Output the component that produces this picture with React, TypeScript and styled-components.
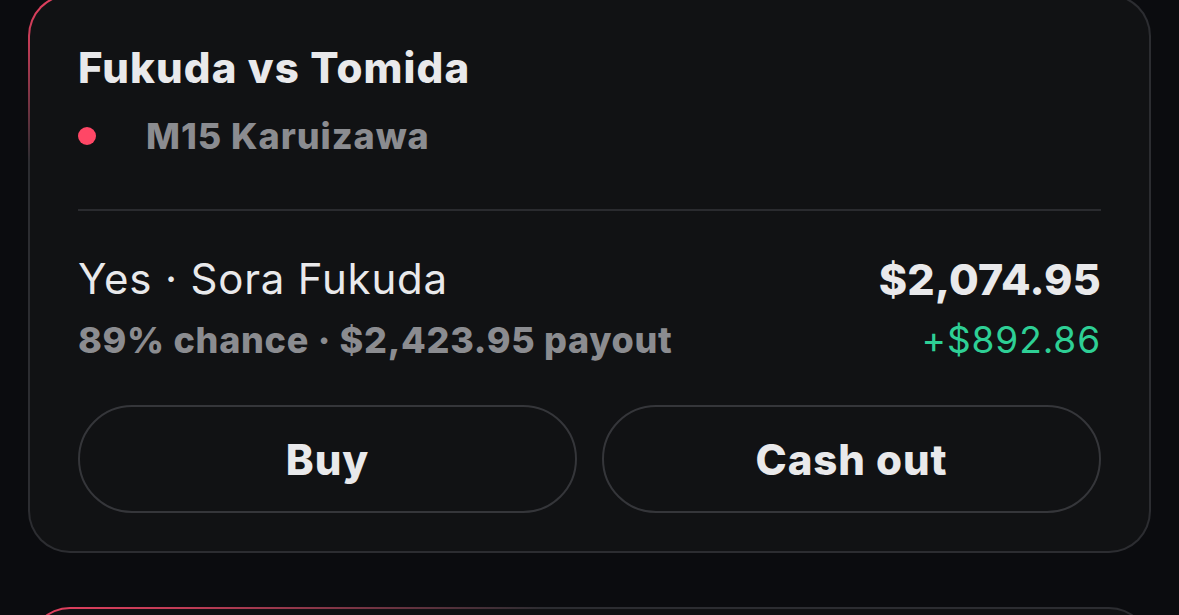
import React from 'react';
import styled, { createGlobalStyle } from 'styled-components';

const GlobalStyle = createGlobalStyle`
  html, body {
    margin: 0;
    padding: 0;
    background: #0b0c0f;
    font-family: Inter, 'Noto Sans', 'Liberation Sans', sans-serif;
    -webkit-font-smoothing: antialiased;
  }
`;

const PositionList = styled.div`
  display: flex;
  flex-direction: column;
  gap: 54px;
  padding: 0 28px;
  margin-top: -6px;
`;

const Card = styled.section<{ $placeholder?: boolean }>`
  border: 2px solid transparent;
  border-radius: 42px;
  padding: 46px 48px 38px;
  min-height: ${(p) => (p.$placeholder ? '200px' : 'auto')};
  background:
    linear-gradient(#111214, #111214) padding-box,
    radial-gradient(ellipse 46% 30% at 0% 0%, #e6405f 0%, rgba(230, 64, 95, 0.8) 30%, rgba(44, 45, 49, 0) 100%) border-box,
    linear-gradient(#2c2d31, #2c2d31) border-box;
`;

const Title = styled.h2`
  margin: 0;
  font-size: 42px;
  font-weight: 800;
  line-height: 52px;
  color: #e9e9eb;
  letter-spacing: 1.1px;
`;

const EventRow = styled.div`
  display: flex;
  align-items: center;
  gap: 50px;
  margin-top: 20px;
`;

const LiveDot = styled.span<{ $color: string }>`
  width: 18px;
  height: 18px;
  border-radius: 50%;
  background: ${(p) => p.$color};
  flex: none;
`;

const EventName = styled.span`
  font-size: 36px;
  font-weight: 800;
  line-height: 44px;
  color: #8b8c90;
  letter-spacing: 0.95px;
`;

const Divider = styled.hr`
  border: none;
  height: 2px;
  background: #2a2b2f;
  margin: 51px 0 42px;
`;

const Summary = styled.div`
  display: flex;
  justify-content: space-between;
  align-items: flex-start;
`;

const Column = styled.div<{ $align?: 'left' | 'right' }>`
  display: flex;
  flex-direction: column;
  gap: 12px;
  align-items: ${(p) => (p.$align === 'right' ? 'flex-end' : 'flex-start')};
`;

const Pick = styled.span`
  font-size: 42px;
  font-weight: 400;
  line-height: 52px;
  color: #e9e9eb;
  letter-spacing: 0.8px;
`;

const Amount = styled.span`
  font-size: 43px;
  font-weight: 800;
  line-height: 52px;
  color: #e9e9eb;
  letter-spacing: 0.2px;
`;

const Meta = styled.span`
  font-size: 36px;
  font-weight: 800;
  line-height: 46px;
  color: #8b8c90;
  letter-spacing: 0.7px;
`;

const Gain = styled.span`
  font-size: 37px;
  font-weight: 400;
  line-height: 46px;
  color: #2ecf95;
  letter-spacing: 0.9px;
`;

const Actions = styled.div`
  display: grid;
  grid-template-columns: 1fr 1fr;
  gap: 25px;
  margin-top: 42px;
`;

const PillButton = styled.button`
  box-sizing: border-box;
  height: 108px;
  border-radius: 999px;
  border: 2px solid #35363a;
  background: transparent;
  color: #e9e9eb;
  font-family: inherit;
  font-size: 42px;
  font-weight: 800;
  letter-spacing: 0.9px;
  cursor: pointer;
`;

export default function App() {
  return (
    <>
      <GlobalStyle />
      <PositionList>
        <Card>
          <Title>Fukuda vs Tomida</Title>
          <EventRow>
            <LiveDot $color="#ff4766" />
            <EventName>M15 Karuizawa</EventName>
          </EventRow>
          <Divider />
          <Summary>
            <Column>
              <Pick>Yes · Sora Fukuda</Pick>
              <Meta>89% chance · $2,423.95 payout</Meta>
            </Column>
            <Column $align="right">
              <Amount>$2,074.95</Amount>
              <Gain>+$892.86</Gain>
            </Column>
          </Summary>
          <Actions>
            <PillButton>Buy</PillButton>
            <PillButton>Cash out</PillButton>
          </Actions>
        </Card>
        <Card $placeholder />
      </PositionList>
    </>
  );
}
